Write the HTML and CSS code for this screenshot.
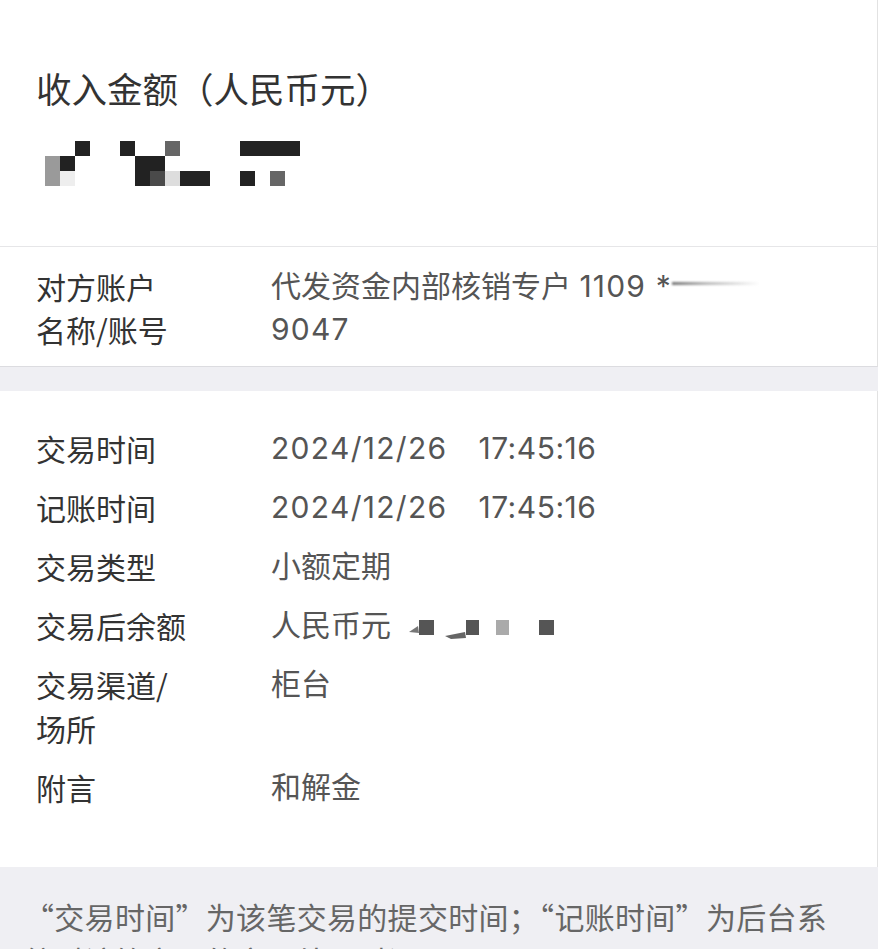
FILE: index.html
```html
<!DOCTYPE html>
<html lang="zh-CN">
<head>
<meta charset="utf-8">
<title>交易详情</title>
<link rel="stylesheet" href="styles.css">
</head>
<body>
<div class="page">
  <section class="amount-card">
    <div class="amount-title">收入金额（人民币元）</div>
    <svg class="mosaic" width="255" height="45" viewBox="0 0 255 45">
      <rect x="30" y="0" width="15" height="15" fill="#222"/>
      <rect x="15" y="15" width="15" height="15" fill="#222"/>
      <rect x="0" y="15" width="15" height="30" fill="#9a9a9a"/>
      <rect x="15" y="30" width="15" height="15" fill="#eeeeee"/>
      <rect x="75" y="0" width="15" height="15" fill="#222"/>
      <rect x="90" y="15" width="30" height="30" fill="#222"/>
      <rect x="105" y="30" width="15" height="15" fill="#4a4a4a"/>
      <rect x="120" y="0" width="15" height="15" fill="#666"/>
      <rect x="120" y="30" width="15" height="15" fill="#dddddd"/>
      <rect x="135" y="30" width="30" height="15" fill="#222"/>
      <rect x="195" y="0" width="60" height="15" fill="#222"/>
      <rect x="195" y="30" width="15" height="15" fill="#222"/>
      <rect x="225" y="30" width="15" height="15" fill="#666"/>
    </svg>
  </section>

  <section class="account-card">
    <div class="row">
      <div class="label">对方账户<br>名称/账号</div>
      <div class="value">代发资金内部核销专户 <span class="num">1109 *</span><span class="smear"></span><br><span class="num">9047</span></div>
    </div>
  </section>

  <div class="gap-band"></div>

  <section class="detail-card">
    <div class="row">
      <div class="label">交易时间</div>
      <div class="value"><span class="date">2024/12/26</span><span class="time">17:45:16</span></div>
    </div>
    <div class="row">
      <div class="label">记账时间</div>
      <div class="value"><span class="date">2024/12/26</span><span class="time">17:45:16</span></div>
    </div>
    <div class="row">
      <div class="label">交易类型</div>
      <div class="value">小额定期</div>
    </div>
    <div class="row">
      <div class="label">交易后余额</div>
      <div class="value">人民币元<svg class="mini-mosaic" width="150" height="22" viewBox="0 0 150 22">
        <polygon points="2,15 11,9 12,16" fill="#777"/>
        <rect x="12" y="3" width="15" height="15" fill="#555"/>
        <polygon points="38,19 58,15 59,21 44,22" fill="#666"/>
        <rect x="59" y="3" width="13" height="15" fill="#555"/>
        <rect x="89" y="3" width="13" height="15" fill="#aaa"/>
        <rect x="132" y="3" width="15" height="15" fill="#555"/>
      </svg></div>
    </div>
    <div class="row">
      <div class="label">交易渠道/<br>场所</div>
      <div class="value">柜台</div>
    </div>
    <div class="row">
      <div class="label">附言</div>
      <div class="value">和解金</div>
    </div>
  </section>

  <section class="footnote">
    <p>“交易时间”为该笔交易的提交时间；“记账时间”为后台系统对该笔交易的实际处理时间。</p>
  </section>
</div>
</body>
</html>
```

FILE: styles.css
```css
* {
  box-sizing: border-box;
}

html, body {
  margin: 0;
  padding: 0;
  background: #ffffff;
}

body {
  font-family: "Noto Sans CJK SC", "Noto Sans", sans-serif;
  color: #333;
  overflow: hidden;
}

.page {
  width: 878px;
  height: 949px;
  overflow: hidden;
}

.amount-card {
  padding: 66px 36px 60px 36px;
  border-bottom: 1px solid #e6e6e8;
  border-right: 1px solid #e2e2e2;
}

.amount-title {
  font-size: 35.5px;
  line-height: 44px;
  color: #333;
}

.mosaic {
  display: block;
  margin: 31px 0 0 9px;
  filter: blur(0.6px);
}

.account-card {
  padding: 18px 36px 15px 36px;
  border-bottom: 1px solid #dcdce0;
  border-right: 1px solid #e2e2e2;
}

.row {
  display: flex;
  font-size: 30px;
  line-height: 43px;
}

.label {
  width: 235px;
  flex-shrink: 0;
  color: #333;
}

.value {
  color: #555;
  font-family: "Inter", "Noto Sans CJK SC", sans-serif;
}

.num {
  letter-spacing: 1.2px;
}

.date {
  letter-spacing: 1.3px;
}

.time {
  margin-left: 31px;
  letter-spacing: 0.5px;
}

.smear {
  display: inline-block;
  width: 88px;
  height: 3px;
  vertical-align: 12px;
  background: linear-gradient(to right, #777 0%, #bbb 40%, rgba(220,220,220,0) 100%);
  filter: blur(0.8px);
}

.gap-band {
  height: 24px;
  background: #efeff3;
}

.detail-card {
  padding: 35px 36px 58px 36px;
  display: flex;
  flex-direction: column;
  gap: 15px;
  border-right: 1px solid #e2e2e2;
}

.detail-card .row {
  line-height: 44px;
}

.mini-mosaic {
  vertical-align: -3px;
  margin-left: 16px;
  filter: blur(0.5px);
}

.footnote {
  background: #efeff3;
  padding: 27px 36px 20px 24px;
}

.footnote p {
  margin: 0;
  font-size: 30px;
  line-height: 44px;
  letter-spacing: 0.3px;
  color: #666;
}
```
